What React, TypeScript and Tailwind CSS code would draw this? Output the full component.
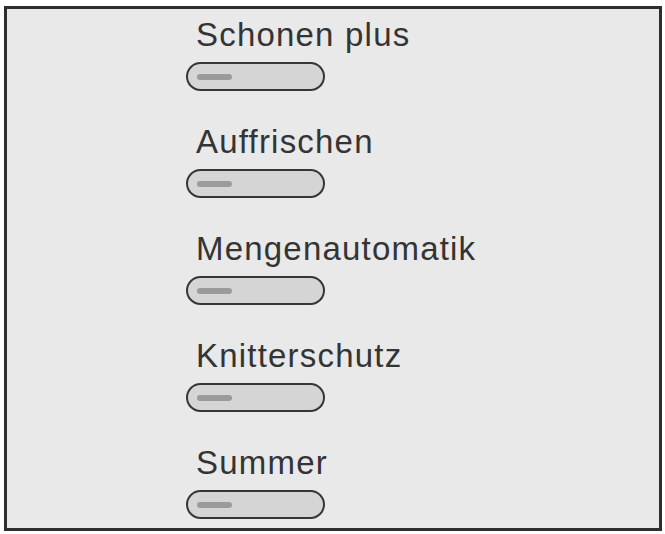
import React from 'react';

// Option list shown on the panel, each with its (off) switch
const options = ['Schonen plus', 'Auffrischen', 'Mengenautomatik', 'Knitterschutz', 'Summer'];

function OffSwitch() {
  return (
    <div className="mt-[11px] flex h-[29px] w-[139px] items-center rounded-full border-[2.5px] border-[#363636] bg-[#d5d5d5] pl-[8.5px]">
      <div className="h-[6px] w-[35px] rounded-full bg-[#9b9b9b]" />
    </div>
  );
}

export default function App() {
  return (
    <div className="h-[534px] w-[665px] bg-white pl-[4px] pt-[6px] font-[family-name:'Liberation_Sans',Arial,sans-serif]">
      <div className="flex h-[525px] w-[658px] flex-col gap-[34px] border-[3px] border-[#2e2e2e] bg-[#e9e9e9] pl-[179px] pt-[9px]">
        {options.map((label) => (
          <div key={label} className="flex flex-col">
            <span className="ml-[10px] h-[33px] text-[33px] leading-none tracking-[1.2px] text-[#343434]">
              {label}
            </span>
            <OffSwitch />
          </div>
        ))}
      </div>
    </div>
  );
}
